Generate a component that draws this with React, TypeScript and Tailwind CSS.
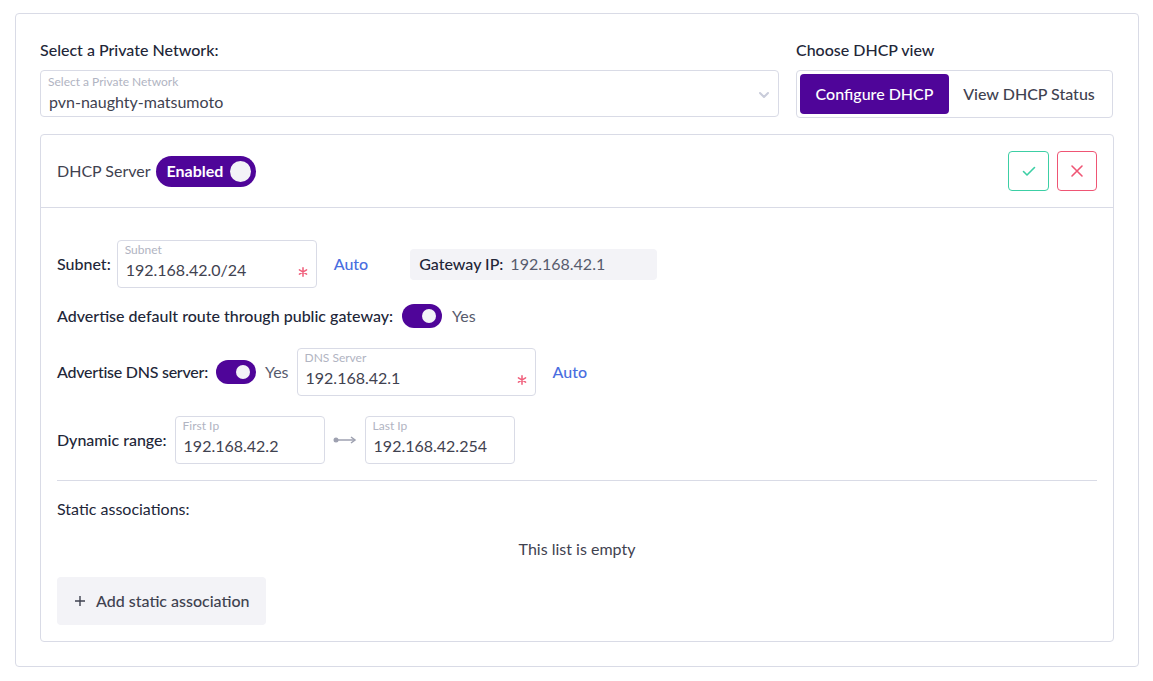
import React from "react";

const font = { fontFamily: "Lato, 'Noto Sans', sans-serif" };

function Toggle() {
  return (
    <div className="relative w-[40px] h-[24px] rounded-full bg-[#4f0599] shrink-0">
      <div className="absolute right-[6px] top-[5px] w-[14px] h-[14px] rounded-full bg-[#f3f3f7]" />
    </div>
  );
}

function Star() {
  return (
    <svg width="10" height="10" viewBox="0 0 10 10" fill="none">
      <path
        d="M5 0.8 V9.2 M1.4 2.9 L8.6 7.1 M1.4 7.1 L8.6 2.9"
        stroke="#f05d7a"
        strokeWidth="1.5"
        strokeLinecap="round"
      />
    </svg>
  );
}

function Field({
  label,
  value,
  width,
  required,
}: {
  label: string;
  value: string;
  width: string;
  required?: boolean;
}) {
  return (
    <div
      className={`relative h-[48px] ${width} border border-[#d9dbe6] rounded-[4px] bg-white shrink-0`}
    >
      <div className="absolute left-[7px] top-[1px] text-[12px] leading-[16px] text-[#b1b4c2]">
        {label}
      </div>
      <div className="absolute left-[8px] top-[17px] text-[16px] leading-[24px] text-[#3f4250]">
        {value}
      </div>
      {required && (
        <div className="absolute right-[8px] top-[26px] flex">
          <Star />
        </div>
      )}
    </div>
  );
}

export default function App() {
  return (
    <div className="w-[1153px] h-[681px] bg-white pt-[13px] pl-[15px]" style={font}>
      <div className="w-[1124px] h-[654px] border border-[#d9dbe6] rounded-[4px] pt-[24px] px-[24px]">
        {/* top row */}
        <div className="flex gap-[17px]">
          <div className="w-[739px]">
            <div className="text-[16px] leading-[24px] text-[#222638] font-medium">
              Select a Private Network:
            </div>
            <div className="relative mt-[8px] h-[47px] border border-[#d9dbe6] rounded-[4px]">
              <div className="absolute left-[7px] top-[3px] text-[12px] leading-[16px] text-[#b1b4c2]">
                Select a Private Network
              </div>
              <div className="absolute left-[8px] top-[19px] text-[16px] leading-[24px] text-[#3f4250]">
                pvn-naughty-matsumoto
              </div>
              <svg
                className="absolute right-[8px] top-[19px]"
                width="12"
                height="10"
                viewBox="0 0 12 10"
                fill="none"
              >
                <path d="M2 3 L6 7 L10 3" stroke="#c9ccda" strokeWidth="2" strokeLinecap="round" strokeLinejoin="round" />
              </svg>
            </div>
          </div>
          <div className="w-[317px]">
            <div className="text-[16px] leading-[24px] text-[#222638] font-medium">
              Choose DHCP view
            </div>
            <div className="mt-[8px] h-[48px] border border-[#d9dbe6] rounded-[4px] p-[3px] flex">
              <div className="w-[149px] h-[40px] rounded-[4px] bg-[#4f0599] text-white text-[16px] font-medium flex items-center justify-center">
                Configure DHCP
              </div>
              <div className="flex-1 h-[40px] text-[#3f4250] text-[16px] font-medium flex items-center justify-center">
                View DHCP Status
              </div>
            </div>
          </div>
        </div>

        {/* inner card */}
        <div className="mt-[16px] border border-[#d9dbe6] rounded-[4px] h-[508px]">
          <div className="flex items-center justify-between px-[16px] py-[16px] border-b border-[#d9dbe6]">
            <div className="flex items-center gap-[5px]">
              <span className="text-[16px] text-[#3f4250]">DHCP Server</span>
              <div className="w-[100px] h-[31px] rounded-full bg-[#4f0599] flex items-center justify-between pl-[11px] pr-[5px]">
                <span className="text-white font-bold text-[16px]">Enabled</span>
                <div className="w-[21px] h-[21px] rounded-full bg-[#f3f3f7]" />
              </div>
            </div>
            <div className="flex gap-[8px]">
              <div className="w-[41px] h-[40px] border border-[#3ccfa5] rounded-[4px] flex items-center justify-center">
                <svg width="16" height="16" viewBox="0 0 16 16" fill="none">
                  <path d="M2.5 8.5 L6 12 L13.5 4.5" stroke="#3ccfa5" strokeWidth="1.6" strokeLinecap="round" strokeLinejoin="round" />
                </svg>
              </div>
              <div className="w-[40px] h-[40px] border border-[#ef5574] rounded-[4px] flex items-center justify-center">
                <svg width="14" height="14" viewBox="0 0 14 14" fill="none">
                  <path d="M2 2 L12 12 M12 2 L2 12" stroke="#ef5574" strokeWidth="1.6" strokeLinecap="round" />
                </svg>
              </div>
            </div>
          </div>

          <div className="px-[16px] pt-[32px] text-[16px] text-[#222638]">
            {/* subnet */}
            <div className="flex items-center">
              <span className="font-medium">Subnet:</span>
              <div className="ml-[6px]">
                <Field label="Subnet" value="192.168.42.0/24" width="w-[200px]" required />
              </div>
              <span className="ml-[17px] text-[#4a6ee0] font-medium">Auto</span>
              <div className="ml-[42px] w-[247px] h-[31px] rounded-[4px] bg-[#f3f3f7] flex items-center px-[9px] gap-[7px]">
                <span className="font-medium text-[#222638]">Gateway IP:</span>
                <span className="text-[#575b6d]">192.168.42.1</span>
              </div>
            </div>
            {/* default route */}
            <div className="flex items-center mt-[16px] h-[24px]">
              <span className="font-medium">Advertise default route through public gateway:</span>
              <div className="ml-[9px]">
                <Toggle />
              </div>
              <span className="ml-[10px] text-[#575b6d]">Yes</span>
            </div>
            {/* DNS */}
            <div className="flex items-center mt-[20px]">
              <span className="font-medium tracking-[-0.25px]">Advertise DNS server:</span>
              <div className="ml-[8px]">
                <Toggle />
              </div>
              <span className="ml-[9px] text-[#575b6d]">Yes</span>
              <div className="ml-[8px]">
                <Field label="DNS Server" value="192.168.42.1" width="w-[239px]" required />
              </div>
              <span className="ml-[17px] text-[#4a6ee0] font-medium">Auto</span>
            </div>
            {/* range */}
            <div className="flex items-center mt-[20px]">
              <span className="font-medium">Dynamic range:</span>
              <div className="ml-[8px]">
                <Field label="First Ip" value="192.168.42.2" width="w-[150px]" />
              </div>
              <svg className="mx-[8px]" width="24" height="8" viewBox="0 0 24 8" fill="none">
                <circle cx="3" cy="4" r="2.5" fill="#9ea1b0" />
                <path d="M3 4 H21" stroke="#9ea1b0" strokeWidth="1.5" />
                <path d="M18 1 L22 4 L18 7" stroke="#9ea1b0" strokeWidth="1.5" fill="none" />
              </svg>
              <Field label="Last Ip" value="192.168.42.254" width="w-[150px]" />
            </div>
            <div className="mt-[16px] border-t border-[#d9dbe6]" />
            <div className="mt-[16px] leading-[24px] text-[#222638]">Static associations:</div>
            <div className="mt-[16px] leading-[24px] text-center text-[#3f4250]">This list is empty</div>
            <div className="mt-[16px] w-[209px] h-[48px] rounded-[4px] bg-[#f3f3f7] flex items-center pl-[17px] gap-[10px] text-[#3f4250] font-medium">
              <svg width="12" height="12" viewBox="0 0 12 12" fill="none">
                <path d="M6 1 V11 M1 6 H11" stroke="#3f4250" strokeWidth="1.4" />
              </svg>
              <span>Add static association</span>
            </div>
          </div>
        </div>
      </div>
    </div>
  );
}
